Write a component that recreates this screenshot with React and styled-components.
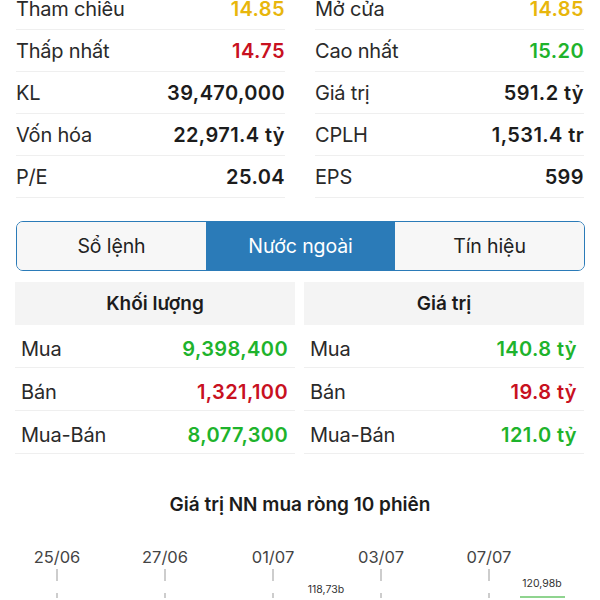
import React from "react";
import styled, { createGlobalStyle } from "styled-components";

const Global = createGlobalStyle`
  html, body { margin: 0; padding: 0; background: #fff; overflow: hidden; }
  body { font-family: Inter, "Noto Sans", sans-serif; color: #222; }
`;

const Page = styled.div`
  width: 600px;
  height: 600px;
  overflow: hidden;
  background: #fff;
`;

const Inner = styled.div`
  margin-top: -12px;
  padding: 0 15px 0 16px;
`;

const StatsGrid = styled.div`
  display: grid;
  grid-template-columns: 269px 269px;
  column-gap: 30px;
`;

const StatRow = styled.div`
  height: 42px;
  box-sizing: border-box;
  border-bottom: 1px solid #efefef;
  display: flex;
  align-items: center;
  justify-content: space-between;
  font-size: 20px;
`;

const Label = styled.span`
  color: #2a2a2a;
  font-weight: 400;
  letter-spacing: -0.2px;
`;

const colors = {
  yellow: "#e8b60c",
  red: "#c8111f",
  green: "#1eb32c",
  dark: "#1c1c1c",
};

const Value = styled.span`
  color: ${(p) => colors[p.$tone || "dark"]};
  font-weight: 600;
  letter-spacing: 0.4px;
`;

const Tabs = styled.div`
  margin-top: 23px;
  height: 50px;
  box-sizing: border-box;
  border: 1.5px solid #2b7bb8;
  border-radius: 7px;
  overflow: hidden;
  display: grid;
  grid-template-columns: 1fr 1fr 1fr;
`;

const Tab = styled.div`
  display: flex;
  align-items: center;
  justify-content: center;
  font-size: 19.5px;
  letter-spacing: -0.1px;
  background: ${(p) => (p.$active ? "#2b7bb8" : "#f7f7f7")};
  color: ${(p) => (p.$active ? "#fff" : "#222")};
`;

const Tables = styled.div`
  margin-top: 11px;
  margin-left: -1px;
  display: grid;
  grid-template-columns: 280px 280px;
  column-gap: 9px;
`;

const TableCol = styled.div`
  display: flex;
  flex-direction: column;
`;

const TableHead = styled.div`
  height: 43px;
  background: #f4f4f4;
  display: flex;
  align-items: center;
  justify-content: center;
  font-size: 19px;
  font-weight: 600;
  color: #1c1c1c;
`;

const TableRow = styled.div`
  height: 43px;
  box-sizing: border-box;
  border-bottom: 1px solid #efefef;
  display: flex;
  align-items: center;
  justify-content: space-between;
  padding: 5px 7px 0 6px;
  font-size: 20px;
`;

const ChartTitle = styled.div`
  margin-top: 39px;
  text-align: center;
  font-size: 19px;
  font-weight: 600;
  color: #1c1c1c;
  margin-left: -16px;
  margin-right: -15px;
`;

const ChartSvg = styled.svg`
  display: block;
  margin: 12px 0 0 -16px;
`;

const stats = [
  [
    ["Tham chiêu", "14.85", "yellow"],
    ["Mở cửa", "14.85", "yellow"],
  ],
  [
    ["Thấp nhất", "14.75", "red"],
    ["Cao nhất", "15.20", "green"],
  ],
  [
    ["KL", "39,470,000"],
    ["Giá trị", "591.2 tỷ"],
  ],
  [
    ["Vốn hóa", "22,971.4 tỷ"],
    ["CPLH", "1,531.4 tr"],
  ],
  [
    ["P/E", "25.04"],
    ["EPS", "599"],
  ],
];

const tables = [
  {
    title: "Khối lượng",
    rows: [
      ["Mua", "9,398,400", "green"],
      ["Bán", "1,321,100", "red"],
      ["Mua-Bán", "8,077,300", "green"],
    ],
  },
  {
    title: "Giá trị",
    rows: [
      ["Mua", "140.8 tỷ", "green"],
      ["Bán", "19.8 tỷ", "red"],
      ["Mua-Bán", "121.0 tỷ", "green"],
    ],
  },
];

const dates = ["25/06", "27/06", "01/07", "03/07", "07/07"];

function Chart() {
  return (
    <ChartSvg width="600" height="70" viewBox="0 0 600 70">
      {dates.map((d, i) => {
        const x = 57 + i * 108;
        return (
          <g key={d}>
            <text
              x={x}
              y="35"
              textAnchor="middle"
              fontSize="16.5"
              fill="#444"
              fontFamily="Inter, sans-serif"
            >
              {d}
            </text>
            <line
              x1={x}
              x2={x}
              y1="41"
              y2="70"
              stroke="#bdbdbd"
              strokeWidth="1.5"
              strokeDasharray="12 12"
            />
          </g>
        );
      })}
      <text x="326" y="65" textAnchor="middle" fontSize="10.5" fill="#333" fontFamily="Inter, sans-serif">
        118,73b
      </text>
      <text x="542" y="59" textAnchor="middle" fontSize="10.5" fill="#333" fontFamily="Inter, sans-serif">
        120,98b
      </text>
      <rect x="520" y="68" width="45" height="4" fill="#8fd48f" />
    </ChartSvg>
  );
}

export default function App() {
  return (
    <Page>
      <Global />
      <Inner>
        <StatsGrid>
          {stats.flat().map(([l, v, tone]) => (
            <StatRow key={l}>
              <Label>{l}</Label>
              <Value $tone={tone}>{v}</Value>
            </StatRow>
          ))}
        </StatsGrid>
        <Tabs>
          <Tab>Sổ lệnh</Tab>
          <Tab $active>Nước ngoài</Tab>
          <Tab>Tín hiệu</Tab>
        </Tabs>
        <Tables>
          {tables.map((t) => (
            <TableCol key={t.title}>
              <TableHead>{t.title}</TableHead>
              {t.rows.map(([l, v, tone]) => (
                <TableRow key={l}>
                  <Label>{l}</Label>
                  <Value $tone={tone}>{v}</Value>
                </TableRow>
              ))}
            </TableCol>
          ))}
        </Tables>
        <ChartTitle>Giá trị NN mua ròng 10 phiên</ChartTitle>
        <Chart />
      </Inner>
    </Page>
  );
}
